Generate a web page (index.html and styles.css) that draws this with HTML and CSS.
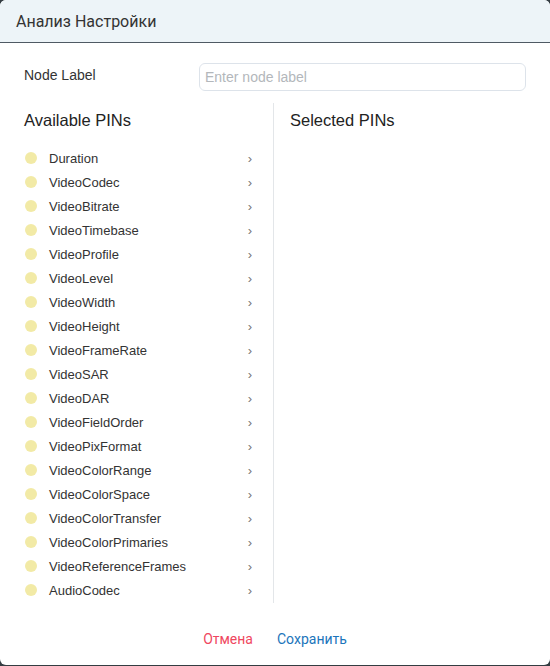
FILE: index.html
```html
<!DOCTYPE html>
<html>
<head>
<meta charset="utf-8">
<link rel="stylesheet" href="styles.css">
</head>
<body>
<div class="modal">
  <div class="header">Анализ Настройки</div>
  <div class="content">
    <div class="field">
      <label class="field-label">Node Label</label>
      <input class="field-input" type="text" placeholder="Enter node label">
    </div>
    <div class="columns">
      <div class="col col-left">
        <div class="col-title">Available PINs</div>
        <ul class="pin-list">
          <li class="pin"><span class="dot"></span><span class="pin-name">Duration</span><span class="chev">›</span></li>
          <li class="pin"><span class="dot"></span><span class="pin-name">VideoCodec</span><span class="chev">›</span></li>
          <li class="pin"><span class="dot"></span><span class="pin-name">VideoBitrate</span><span class="chev">›</span></li>
          <li class="pin"><span class="dot"></span><span class="pin-name">VideoTimebase</span><span class="chev">›</span></li>
          <li class="pin"><span class="dot"></span><span class="pin-name">VideoProfile</span><span class="chev">›</span></li>
          <li class="pin"><span class="dot"></span><span class="pin-name">VideoLevel</span><span class="chev">›</span></li>
          <li class="pin"><span class="dot"></span><span class="pin-name">VideoWidth</span><span class="chev">›</span></li>
          <li class="pin"><span class="dot"></span><span class="pin-name">VideoHeight</span><span class="chev">›</span></li>
          <li class="pin"><span class="dot"></span><span class="pin-name">VideoFrameRate</span><span class="chev">›</span></li>
          <li class="pin"><span class="dot"></span><span class="pin-name">VideoSAR</span><span class="chev">›</span></li>
          <li class="pin"><span class="dot"></span><span class="pin-name">VideoDAR</span><span class="chev">›</span></li>
          <li class="pin"><span class="dot"></span><span class="pin-name">VideoFieldOrder</span><span class="chev">›</span></li>
          <li class="pin"><span class="dot"></span><span class="pin-name">VideoPixFormat</span><span class="chev">›</span></li>
          <li class="pin"><span class="dot"></span><span class="pin-name">VideoColorRange</span><span class="chev">›</span></li>
          <li class="pin"><span class="dot"></span><span class="pin-name">VideoColorSpace</span><span class="chev">›</span></li>
          <li class="pin"><span class="dot"></span><span class="pin-name">VideoColorTransfer</span><span class="chev">›</span></li>
          <li class="pin"><span class="dot"></span><span class="pin-name">VideoColorPrimaries</span><span class="chev">›</span></li>
          <li class="pin"><span class="dot"></span><span class="pin-name">VideoReferenceFrames</span><span class="chev">›</span></li>
          <li class="pin"><span class="dot"></span><span class="pin-name">AudioCodec</span><span class="chev">›</span></li>
        </ul>
      </div>
      <div class="col col-right">
        <div class="col-title">Selected PINs</div>
      </div>
    </div>
  </div>
  <div class="footer">
    <button class="btn btn-cancel">Отмена</button>
    <button class="btn btn-save">Сохранить</button>
  </div>
</div>
</body>
</html>
```

FILE: styles.css
```css
html, body {
  margin: 0;
  padding: 0;
  background: #343d42;
  font-family: "Liberation Sans", Arial, sans-serif;
  color: #333;
}
.modal {
  width: 550px;
  height: 665px;
  background: #fff;
  border-radius: 6px;
  overflow: hidden;
  display: flex;
  flex-direction: column;
  box-sizing: border-box;
}
.header {
  height: 43px;
  box-sizing: border-box;
  background: #edf4f8;
  border-bottom: 1px solid #4f5a64;
  padding: 0 16px;
  display: flex;
  align-items: center;
  font-family: Roboto, "Liberation Sans", sans-serif;
  font-size: 16px;
  color: #333;
}
.content {
  padding: 20px 24px 0;
  display: flex;
  flex-direction: column;
  gap: 12px;
}
.field {
  display: flex;
  align-items: center;
  height: 28px;
}
.field-label {
  width: 175px;
  font-size: 14px;
  color: #333;
  margin-top: -4px;
}
.field-input {
  flex: 1;
  height: 28px;
  box-sizing: border-box;
  border: 1px solid #dde3ea;
  border-radius: 6px;
  padding: 0 5px;
  font-family: "Liberation Sans", Arial, sans-serif;
  font-size: 14px;
  color: #333;
  outline: none;
}
.field-input::placeholder {
  color: #b3b7bb;
}
.columns {
  display: flex;
  height: 500px;
}
.col {
  padding-top: 5px;
  box-sizing: border-box;
}
.col-left {
  width: 250px;
  flex: none;
  border-right: 1px solid #e3e6e9;
  padding-right: 17px;
}
.col-right {
  flex: 1;
  padding-left: 16px;
}
.col-title {
  font-size: 16.5px;
  line-height: 24px;
  color: #222;
  margin-bottom: 14px;
}
.pin-list {
  list-style: none;
  margin: 0;
  padding: 0;
}
.pin {
  display: flex;
  align-items: center;
  height: 24px;
  font-size: 13px;
  color: #333;
}
.dot {
  width: 12px;
  height: 12px;
  border-radius: 50%;
  background: #f2eaa6;
  margin-left: 1px;
  margin-right: 12px;
  flex: none;
}
.pin-name {
  flex: 1;
}
.chev {
  color: #777;
  font-size: 13px;
  margin-right: 4px;
}
.footer {
  flex: 1;
  display: flex;
  justify-content: center;
  align-items: center;
  gap: 8px;
  padding-top: 10px;
}
.btn {
  background: none;
  border: none;
  padding: 6px 8px;
  font-family: Roboto, "Liberation Sans", sans-serif;
  font-size: 14px;
  cursor: pointer;
}
.btn-cancel {
  color: #ef4760;
}
.btn-save {
  color: #1b75bb;
}
```
